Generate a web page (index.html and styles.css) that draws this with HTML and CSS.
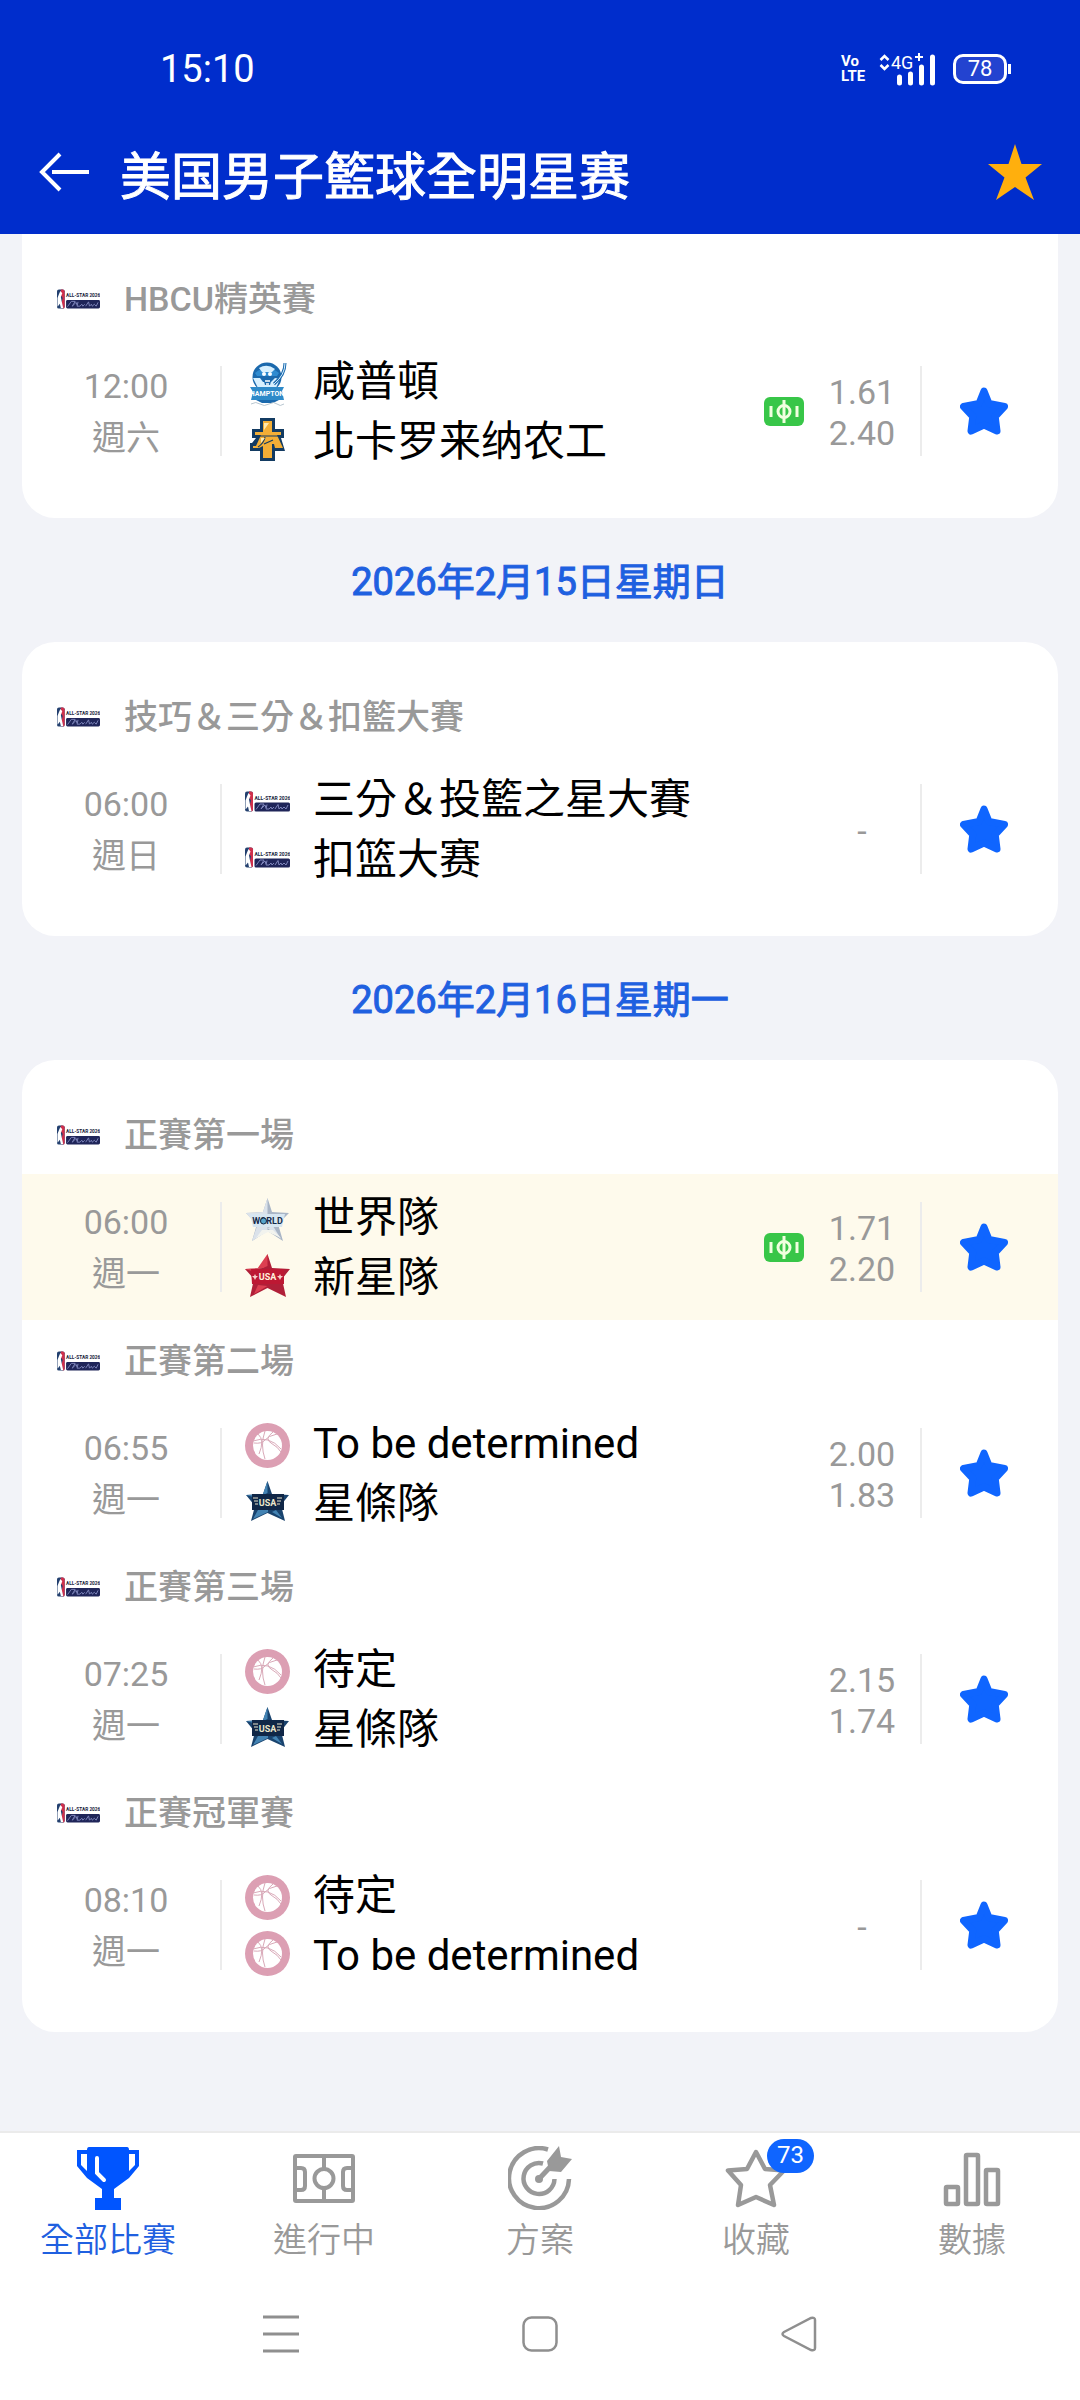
FILE: index.html
```html
<!DOCTYPE html>
<html lang="zh-Hant">
<head>
<meta charset="utf-8">
<meta name="viewport" content="width=device-width, initial-scale=1">
<title>美国男子籃球全明星赛</title>
<link rel="stylesheet" href="styles.css">
</head>
<body>
<svg class="sprite" aria-hidden="true">
  <symbol id="fav" viewBox="0 0 48 48">
    <path d="M24 4 29 16.500 44.500 19.500 35.200 29.500 37 44 24 38 11 44 12.800 29.500 3.500 19.500 19 16.500Z" fill="#0f65ff" stroke="#0f65ff" stroke-width="7" stroke-linejoin="round"/>
  </symbol>
  <symbol id="live" viewBox="0 0 40 29">
    <rect width="40" height="29" rx="6" fill="#38c648"/>
    <g fill="none" stroke="#f1ffdf" stroke-width="3"><circle cx="20" cy="14.500" r="6"/><path d="M20 3v23M7 9v11M33 9v11"/></g>
  </symbol>
  <symbol id="allstar" viewBox="0 0 45 20">
    <rect x="0" y="0" width="8" height="20" rx="2" fill="#23406f"/>
    <path d="M4 0h2q2 0 2 2v16q0 2-2 2L5 13l1-4-2-3z" fill="#d0304c"/>
    <path d="M3.500 1.500 5.500 4 4 8l1 5 1.500 6.500H4L3 15 .5 18V9L2 5z" fill="#fff"/>
    <text x="9.500" y="8" class="logo-word" font-size="5" fill="#161c3c">ALL-STAR 2026</text>
    <rect x="9.500" y="11" width="35.500" height="9" rx="1.500" fill="#1f2559"/>
    <path d="M11 18 15 12.500h4l-3 5 4-4 1 3M22 13l-1 4.500h3l2-2 1 2 2-2M30 17.500l3-4.500 1 4.500 2-2 1 2 2-2 2 2 2-4" fill="none" stroke="#7e85bb" stroke-width="1"/>
  </symbol>
  <symbol id="hampton" viewBox="0 0 45 45">
    <circle cx="22" cy="16" r="14.500" fill="#1b69ad"/>
    <path d="M10 12q12-10 24 0l-2 3H12z" fill="#2f8bd0"/>
    <path d="M14 7q8-5 16 1l-3 3H17z" fill="#d7f0ff"/>
    <path d="M8 17h7l3 4h8l4-4 5 1-4 9H13z" fill="#d7f0ff"/>
    <circle cx="19" cy="13" r="2" fill="#fff"/><circle cx="25" cy="13" r="2" fill="#fff"/>
    <path d="M18 17h9l-2 7h-5z" fill="#1b69ad"/><path d="M20 20h5M21 23h3" stroke="#fff" stroke-width="1.500"/>
    <path d="M40 2q0 12-11 21" fill="none" stroke="#1b69ad" stroke-width="3"/><path d="M40 2q0 12-11 21" fill="none" stroke="#d7f0ff" stroke-width="1"/>
    <path d="M5 26h34l-2 4 2 9H6l2-8z" fill="#2e8ac9"/>
    <text x="22" y="35" class="logo-word" font-size="7" text-anchor="middle" fill="#fff">HAMPTON</text>
    <path d="M11 39h23l-6 3H17z" fill="#1b69ad"/><path d="M6 43q5-3 9 0t9 0 8 0 7 0" fill="none" stroke="#b8c6d0"/>
  </symbol>
  <symbol id="aggies" viewBox="0 0 45 45">
    <path d="M15 1h15v11h9v9h-3l4 13h-10v10H15V34H5v-8h2l4-5H7v-9h8z" fill="#133b62"/>
    <path d="M18 4h9v11h9v3h-4l6 13h-8l-1-4h-2v14h-9V29l-4 2H8v-2h3l5-11h-6v-3h8z" fill="#f3ae36"/>
    <path d="M12 19h22M20 20q-1 6-7 10M19 27l9-4" fill="none" stroke="#133b62" stroke-width="1.200"/>
    <path d="M19 6h5l-5 7zM16 21h4l-4 5z" fill="#fde9b0"/>
  </symbol>
  <symbol id="world" viewBox="0 0 45 45">
    <path d="M22.500 1 27 15 44 16 33 27 38 44 22.500 34 7 44 12 27 1 16 18 15Z" fill="#a9b5c6"/>
    <path d="M22.500 1v33L7 44l5-15L1 16l17-1zM22.500 31 36 42 28 29z" fill="#dbe2ea"/>
    <path d="M17 33h11l8 8-13-6-12 6z" fill="#f2f3ee"/>
    <path d="M5 17h35l-3 13H8z" fill="#d7e6f1"/>
    <text x="22.500" y="27" class="logo-word" font-size="9" text-anchor="middle" fill="#152b4b">WORLD</text>
    <circle cx="18.500" cy="24" r="3" fill="#57a5cb" stroke="#152b4b"/>
  </symbol>
  <symbol id="usa-red" viewBox="0 0 45 45">
    <path d="M22.500 1 27 15 45 16 37 26 41 44 22.500 35 5 44 9 26 0 16 18 15Z" fill="#b01f38"/>
    <path d="M22.500 1v12L18 15 0 16l10 3zM22.500 33 9 41l4-9z" fill="#dc3f51"/>
    <path d="M6 16h33v15H7z" fill="#bd1833"/>
    <text x="22.500" y="27" class="logo-word" font-size="9" text-anchor="middle" fill="#fff1dd">USA</text>
    <path d="m10 21 1 2 2 0-2 2-1 2-1-2-2-2h2zM35 21l1 2h2l-2 2-1 2-1-2-2-2h2z" fill="#f8cfca"/>
  </symbol>
  <symbol id="usa-blue" viewBox="0 0 45 45">
    <path d="M22.500 2 27 15 44 16 36 26 40 42 22.500 34 6 42 10 27 1 16 18 15Z" fill="#19436e"/>
    <path d="M22.500 2v12L12 19 1 16l17-1zM13 31h10v2L8 40zM31 31l6 8-10-6z" fill="#4383b3"/>
    <path d="M7 15h32v16H7z" fill="#102747"/>
    <text x="22.500" y="27" class="logo-word" font-size="9" text-anchor="middle" fill="#ece7cc">USA</text>
    <path d="M8 19h5M9 22h4M10 25h3M32 19h5M32 22h4M32 25h3" stroke="#ece7cc" stroke-width="1"/>
  </symbol>
  <symbol id="tbd" viewBox="0 0 45 45">
    <circle cx="22.500" cy="22.500" r="22.500" fill="#dc9fb3"/><circle cx="22.500" cy="22.500" r="14.500" fill="#fff"/>
    <path d="M9 20q8 1 11-3t12-6M8 18q16-6 28 8M20 8q-5 14 0 28M13 11q7 6 1 20M28 9q-9 7-2 11t10 9" fill="none" stroke="#d9a9b8" stroke-width="1"/>
  </symbol>
</svg>

<header class="top">
  <div class="status">
    <time class="clock">15:10</time>
    <div class="status-icons">
      <span class="volte"><span>Vo</span><span>LTE</span></span>
      <svg class="signal" viewBox="0 0 57 34" role="img" aria-label="4G+">
        <path d="M1.500 8 5.500 4 9.500 8M1.500 13l4 4 4-4" fill="none" stroke="#fff" stroke-width="2.500"/>
        <text x="12" y="17" class="signal-text" font-size="18">4G</text>
        <path d="M36 5h8M40 1v8" stroke="#fff" stroke-width="2"/>
        <path d="M20.500 25v6M31.500 22v9M42.500 15v16M53.500 5v26" stroke="#fff" stroke-width="5" stroke-linecap="round"/>
      </svg>
      <span class="battery">78</span>
    </div>
  </div>
  <div class="title-bar">
    <button class="icon-btn" type="button" aria-label="返回">
      <svg width="52" height="42" viewBox="0 0 52 42"><path d="M22 3 4 21l18 18M14 21h37" fill="none" stroke="#fff" stroke-width="4"/></svg>
    </button>
    <h1 class="title">美国男子籃球全明星赛</h1>
    <button class="icon-btn" type="button" aria-label="收藏聯賽">
      <svg width="54" height="56" viewBox="0 0 54 56"><path d="M27 0 33.500 20H54L37.500 33.500 46 56 27 43 8 56l8.500-22.500L0 20h20.500z" fill="#ffaf0d"/></svg>
    </button>
  </div>
</header>

<main class="list">
  <section class="card card-first">
    <h3 class="league"><svg class="league-logo"><use href="#allstar"/></svg>HBCU精英賽</h3>
    <article class="match">
      <div class="when"><time>12:00</time><span>週六</span></div>
      <i class="rule"></i>
      <div class="teams">
        <div class="logos"><svg class="team-logo"><use href="#hampton"/></svg><svg class="team-logo"><use href="#aggies"/></svg></div>
        <div class="names"><span>咸普頓</span><span>北卡罗来纳农工</span></div>
      </div>
      <svg class="live"><use href="#live"/></svg>
      <div class="odds"><span>1.61</span><span>2.40</span></div>
      <i class="rule"></i>
      <button class="fav" type="button" aria-label="收藏"><svg class="fav-icon"><use href="#fav"/></svg></button>
    </article>
  </section>

  <h2 class="date">2026年2月15日星期日</h2>
  <section class="card">
    <h3 class="league"><svg class="league-logo"><use href="#allstar"/></svg>技巧＆三分＆扣籃大賽</h3>
    <article class="match">
      <div class="when"><time>06:00</time><span>週日</span></div>
      <i class="rule"></i>
      <div class="teams">
        <div class="logos"><svg class="team-logo"><use href="#allstar"/></svg><svg class="team-logo"><use href="#allstar"/></svg></div>
        <div class="names"><span>三分＆投籃之星大賽</span><span>扣篮大赛</span></div>
      </div>
      <span></span>
      <div class="odds"><span>-</span></div>
      <i class="rule"></i>
      <button class="fav" type="button" aria-label="收藏"><svg class="fav-icon"><use href="#fav"/></svg></button>
    </article>
  </section>

  <h2 class="date">2026年2月16日星期一</h2>
  <section class="card">
    <h3 class="league"><svg class="league-logo"><use href="#allstar"/></svg>正賽第一場</h3>
    <article class="match match-hot">
      <div class="when"><time>06:00</time><span>週一</span></div>
      <i class="rule"></i>
      <div class="teams">
        <div class="logos"><svg class="team-logo"><use href="#world"/></svg><svg class="team-logo"><use href="#usa-red"/></svg></div>
        <div class="names"><span>世界隊</span><span>新星隊</span></div>
      </div>
      <svg class="live"><use href="#live"/></svg>
      <div class="odds"><span>1.71</span><span>2.20</span></div>
      <i class="rule"></i>
      <button class="fav" type="button" aria-label="收藏"><svg class="fav-icon"><use href="#fav"/></svg></button>
    </article>
    <h3 class="league"><svg class="league-logo"><use href="#allstar"/></svg>正賽第二場</h3>
    <article class="match">
      <div class="when"><time>06:55</time><span>週一</span></div>
      <i class="rule"></i>
      <div class="teams">
        <div class="logos"><svg class="team-logo"><use href="#tbd"/></svg><svg class="team-logo"><use href="#usa-blue"/></svg></div>
        <div class="names"><span>To be determined</span><span>星條隊</span></div>
      </div>
      <span></span>
      <div class="odds"><span>2.00</span><span>1.83</span></div>
      <i class="rule"></i>
      <button class="fav" type="button" aria-label="收藏"><svg class="fav-icon"><use href="#fav"/></svg></button>
    </article>
    <h3 class="league"><svg class="league-logo"><use href="#allstar"/></svg>正賽第三場</h3>
    <article class="match">
      <div class="when"><time>07:25</time><span>週一</span></div>
      <i class="rule"></i>
      <div class="teams">
        <div class="logos"><svg class="team-logo"><use href="#tbd"/></svg><svg class="team-logo"><use href="#usa-blue"/></svg></div>
        <div class="names"><span>待定</span><span>星條隊</span></div>
      </div>
      <span></span>
      <div class="odds"><span>2.15</span><span>1.74</span></div>
      <i class="rule"></i>
      <button class="fav" type="button" aria-label="收藏"><svg class="fav-icon"><use href="#fav"/></svg></button>
    </article>
    <h3 class="league"><svg class="league-logo"><use href="#allstar"/></svg>正賽冠軍賽</h3>
    <article class="match">
      <div class="when"><time>08:10</time><span>週一</span></div>
      <i class="rule"></i>
      <div class="teams">
        <div class="logos"><svg class="team-logo"><use href="#tbd"/></svg><svg class="team-logo"><use href="#tbd"/></svg></div>
        <div class="names"><span>待定</span><span>To be determined</span></div>
      </div>
      <span></span>
      <div class="odds"><span>-</span></div>
      <i class="rule"></i>
      <button class="fav" type="button" aria-label="收藏"><svg class="fav-icon"><use href="#fav"/></svg></button>
    </article>
  </section>
</main>

<nav class="tabs">
  <a class="tab tab-active" href="#all">
    <svg class="tab-icon" viewBox="0 0 64 64"><path d="M13 1h38q2 0 2 3h10v16L53 32 38 43v9h7v12H19V52h7v-9L11 32 1 20V4h10q0-3 2-3ZM5 8v11l6 6V8Zm48 0v17l6-6V8Z" fill="#0055ff" fill-rule="evenodd"/><path d="M21 12v15l7 7" fill="none" stroke="#fff" stroke-width="4" stroke-linecap="round"/></svg>
    <span>全部比賽</span>
  </a>
  <a class="tab" href="#live-now">
    <svg class="tab-icon" viewBox="0 0 64 64"><g fill="none" stroke="#999" stroke-width="4"><rect x="3" y="10" width="58" height="45" rx="1"/><path d="M32 10v13M32 42v13M3 22h6q4 0 4 4v14q0 4-4 4H3M61 22h-6q-4 0-4 4v14q0 4 4 4h6"/><circle cx="32" cy="32.500" r="9.500"/></g></svg>
    <span>進行中</span>
  </a>
  <a class="tab" href="#plans">
    <svg class="tab-icon" viewBox="0 0 64 64"><g fill="none" stroke="#999" stroke-width="4.500"><path d="M40 3.500A30 30 0 1 0 61 33"/><path d="M35 17.500A15.500 15.500 0 1 0 46.500 33"/><path d="M30 34 44 19" stroke-width="5"/></g><circle cx="31" cy="33" r="4" fill="#999"/><path d="M51 0 53 11 64 13 53 26 41 25 39 15z" fill="#999"/></svg>
    <span>方案</span>
  </a>
  <a class="tab" href="#favorites">
    <span class="badge-anchor">
      <svg class="tab-icon" viewBox="0 0 64 64"><path d="M32 6 41 23 60 24.500 46 39 50 59 32 51 14 59 17 39 4 24.500 23 23Z" fill="none" stroke="#999" stroke-width="4.500" stroke-linejoin="round"/></svg>
      <span class="badge">73</span>
    </span>
    <span>收藏</span>
  </a>
  <a class="tab" href="#stats">
    <svg class="tab-icon" viewBox="0 0 64 64"><g fill="none" stroke="#999" stroke-width="4.500"><rect x="6" y="41" width="12" height="17" rx="1"/><rect x="26" y="9" width="12" height="49" rx="1"/><rect x="46" y="24" width="12" height="34" rx="1"/></g></svg>
    <span>數據</span>
  </a>
</nav>
<nav class="system">
  <button class="sys-btn" type="button" aria-label="最近"><svg width="36" height="38" viewBox="0 0 36 38"><path d="M0 2h36M0 19h36M0 36h36" stroke="#8f8f8f" stroke-width="3"/></svg></button>
  <button class="sys-btn" type="button" aria-label="主頁"><svg width="36" height="36" viewBox="0 0 36 36"><rect x="1.500" y="1.500" width="33" height="33" rx="8" fill="none" stroke="#8f8f8f" stroke-width="2.500"/></svg></button>
  <button class="sys-btn" type="button" aria-label="返回"><svg width="36" height="36" viewBox="0 0 36 36"><path d="M3 16 30 2q4-1 4 2v28q0 3-4 2L3 20q-3-2 0-4Z" fill="none" stroke="#8f8f8f" stroke-width="2.500"/></svg></button>
</nav>
</body>
</html>
```
FILE: styles.css
```css
* { box-sizing: border-box; }
body {
  margin: 0;
  min-height: 100vh;
  display: flex;
  flex-direction: column;
  background: #f2f3f8;
  color: #000;
  font-family: Roboto, "Noto Sans CJK TC", "Noto Sans CJK SC", sans-serif;
}
h1, h2, h3 { margin: 0; font-weight: 400; }
button { border: 0; padding: 0; background: none; display: flex; cursor: pointer; }
.sprite { position: absolute; width: 0; height: 0; }
.logo-word { font-family: "Liberation Sans Narrow", Roboto, sans-serif; font-weight: 700; }

/* header */
.top { background: #002dcc; color: #fff; }
.status {
  height: 114px;
  padding: 24px 73px 0 160px;
  display: flex;
  align-items: center;
  justify-content: space-between;
}
.clock { font-size: 38px; line-height: 44px; }
.status-icons { display: flex; align-items: center; }
.volte {
  display: flex;
  flex-direction: column;
  width: 26px;
  margin-right: 12px;
  font: 700 15px/15px "Liberation Sans Narrow", Roboto, sans-serif;
}
.signal { width: 57px; height: 34px; margin-right: 17px; }
.signal-text { font-family: "Liberation Sans Narrow", Roboto, sans-serif; fill: #fff; }
.battery {
  position: relative;
  width: 54px;
  height: 30px;
  border: 3px solid #fff;
  border-radius: 10px;
  background: #2343d0;
  font-size: 22px;
  line-height: 24px;
  text-align: center;
}
.battery::after {
  content: "";
  position: absolute;
  left: 52px;
  top: 7px;
  width: 3px;
  height: 10px;
  background: #fff;
}
.title-bar {
  height: 120px;
  padding: 0 38px 4px;
  display: flex;
  align-items: center;
}
.title {
  flex: 1;
  padding: 2px 0 0 30px;
  font-family: "Noto Sans CJK SC", sans-serif;
  font-size: 51px;
  line-height: 60px;
  -webkit-text-stroke: 1px currentColor;
}

/* match list */
.list { flex: 1; padding: 0 22px; }
.card { background: #fff; border-radius: 33px; padding: 34px 0; overflow: hidden; }
.card-first { border-radius: 0 0 33px 33px; padding-top: 24px; }
.date {
  display: flex;
  align-items: center;
  justify-content: center;
  height: 124px;
  padding-bottom: 4px;
  color: #1f60e0;
  font-size: 38px;
  -webkit-text-stroke: 1px currentColor;
}
.league {
  display: flex;
  align-items: center;
  gap: 24px;
  height: 80px;
  padding: 2px 0 0 35px;
  color: #999;
  font-size: 34px;
  font-weight: 500;
  line-height: 40px;
}
.league-logo { width: 43px; height: 20px; }
.match {
  display: grid;
  grid-template-columns: 198px 2px minmax(0, 1fr) 40px 116px 2px 136px;
  align-items: center;
  height: 146px;
}
.match-hot { background: #fefaec; }
.when {
  display: flex;
  flex-direction: column;
  align-items: center;
  padding: 2px 0 0 10px;
  color: #999;
  font-size: 34px;
  line-height: 52px;
}
.rule { height: 90px; background: #ececec; }
.teams { display: flex; align-items: center; gap: 23px; padding-left: 23px; }
.logos { display: flex; flex-direction: column; gap: 11px; }
.team-logo { width: 45px; height: 45px; }
.names { display: flex; flex-direction: column; padding-top: 2px; font-size: 42px; line-height: 60px; white-space: nowrap; }
.live { width: 40px; height: 29px; }
.odds {
  display: flex;
  flex-direction: column;
  align-items: center;
  padding-top: 4px;
  color: #999;
  font-size: 34px;
  line-height: 41px;
}
.fav { height: 100%; align-items: center; justify-content: center; padding-right: 12px; }
.fav-icon { width: 48px; height: 48px; }

/* bottom tabs */
.tabs {
  display: grid;
  grid-template-columns: repeat(5, 1fr);
  padding: 13px 0 8px;
  border-top: 2px solid #ebebeb;
  background: #fff;
}
.tab {
  display: flex;
  flex-direction: column;
  align-items: center;
  gap: 10px;
  color: #999;
  font-size: 34px;
  font-weight: 350;
  line-height: 40px;
  text-decoration: none;
}
.tab-active { color: #1f60e0; }
.tab-icon { display: block; width: 64px; height: 64px; }
.badge-anchor { position: relative; }
.badge {
  position: absolute;
  left: 43px;
  top: -7px;
  width: 47px;
  height: 34px;
  border-radius: 17px;
  background: #0f65ff;
  color: #fff;
  font-size: 24px;
  font-weight: 400;
  line-height: 33px;
  text-align: center;
}
.system {
  display: grid;
  grid-template-columns: repeat(3, 1fr);
  align-items: center;
  justify-items: center;
  height: 132px;
  padding: 0 14%;
  background: #fff;
}
```
